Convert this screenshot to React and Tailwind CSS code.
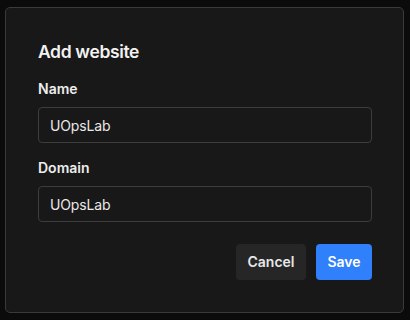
export default function App() {
  return (
    <div
      className="w-[410px] h-[320px] bg-[#0b0b0b] pt-[7px] pl-[5px] pr-[6px] pb-[7px]"
      style={{ fontFamily: "Inter, 'Liberation Sans', sans-serif" }}
    >
      <div className="w-[399px] h-[306px] bg-[#181818] border border-[#3a3a3a] rounded-[5px] pl-8 pr-[31px] pt-[30px]">
        <h2 className="text-[17.5px] leading-7 font-semibold tracking-[-0.02em] text-[#f2f2f2] mb-[13px]">Add website</h2>
        <div className="flex flex-col">
          <label className="text-sm leading-5 font-semibold text-[#ededed] mb-2">Name</label>
          <input
            defaultValue="UOpsLab"
            className="h-9 w-full bg-[#181818] border border-[#3d3d3d] rounded-[4px] pl-[11px] pr-3 text-sm tracking-[-0.01em] text-[#e8e8e8] outline-none"
          />
          <label className="text-sm leading-5 font-semibold text-[#ededed] mt-[15px] mb-2">Domain</label>
          <input
            defaultValue="UOpsLab"
            className="h-9 w-full bg-[#181818] border border-[#3d3d3d] rounded-[4px] pl-[11px] pr-3 text-sm tracking-[-0.01em] text-[#e8e8e8] outline-none"
          />
        </div>
        <div className="flex justify-end gap-[10px] mt-[22px]">
          <button className="h-9 w-[70px] rounded-[4px] bg-[#262626] text-sm font-semibold text-[#e8e8e8]">
            Cancel
          </button>
          <button className="h-9 w-[56px] rounded-[4px] bg-[#2f80fa] text-sm font-semibold text-white">
            Save
          </button>
        </div>
      </div>
    </div>
  );
}
